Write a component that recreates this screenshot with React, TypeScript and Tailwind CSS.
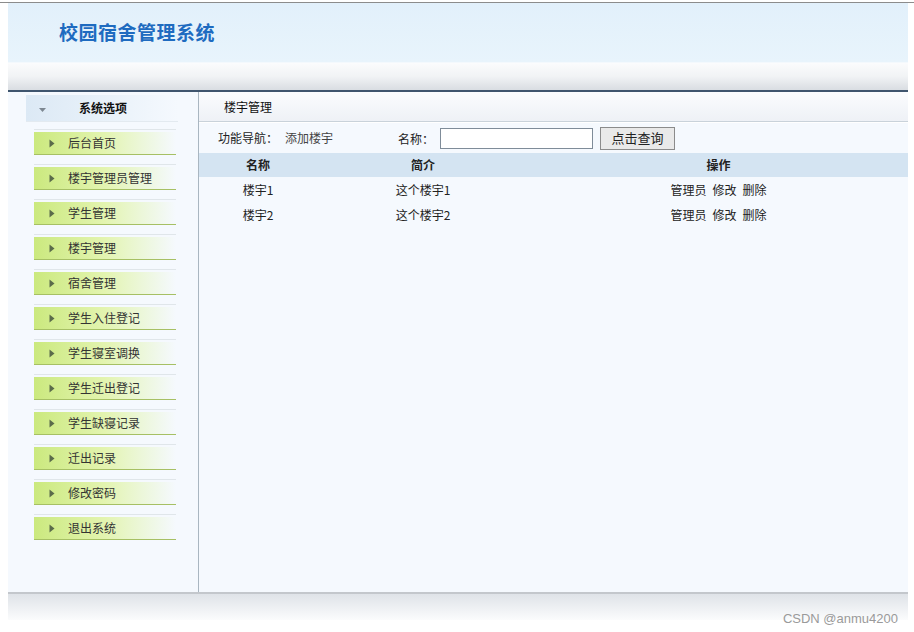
import React from "react";

const menu = [
  "后台首页",
  "楼宇管理员管理",
  "学生管理",
  "楼宇管理",
  "宿舍管理",
  "学生入住登记",
  "学生寝室调换",
  "学生迁出登记",
  "学生缺寝记录",
  "迁出记录",
  "修改密码",
  "退出系统",
];

const rows = [
  { name: "楼宇1", intro: "这个楼宇1" },
  { name: "楼宇2", intro: "这个楼宇2" },
];

const font = "font-['Noto_Sans_CJK_SC','Noto_Sans',sans-serif]";

function RightArrow() {
  return (
    <svg width="6" height="9" viewBox="0 0 6 9" className="shrink-0">
      <path d="M0.5 0.5 L5.5 4.5 L0.5 8.5 Z" fill="#5a6b4a" />
    </svg>
  );
}

function DownArrow() {
  return (
    <svg width="7" height="4" viewBox="0 0 7 4" className="shrink-0">
      <path d="M0 0 L7 0 L3.5 4 Z" fill="#7d8791" />
    </svg>
  );
}

export default function App() {
  return (
    <div className={`relative h-[632px] w-[914px] overflow-hidden bg-white text-[12px] text-[#222] ${font}`}>
      <div className="h-[2px]" />
      <div className="border-t border-[#8c8c8c]" />

      <div className="ml-[8px] w-[900px]">
        {/* header */}
        <div className="flex h-[60px] items-center bg-linear-to-b from-[#e2f0fb] to-[#e8f4fc] pl-[51px] border-b border-[#f4f9fd]">
          <span className="text-[19px] font-bold tracking-[0.5px] text-[#1e6bc0]">
            校园宿舍管理系统
          </span>
        </div>

        {/* bar */}
        <div className="h-[27px] bg-linear-to-b from-[#fbfcfd] via-[#f1f3f5] to-[#d9dde2]" />
        <div className="h-[2px] bg-[#3f556e]" />

        {/* body */}
        <div className="flex h-[500px] bg-[#f5f9fe]">
          {/* sidebar */}
          <div className="w-[191px] shrink-0 border-r border-[#a9b6c1] pt-[3px]">
            <div className="ml-[18px] flex h-[27px] w-[152px] items-center border-b border-[#e3eaf0] bg-linear-to-r from-[#dce9f5] via-[#e8f1f9] to-[#f5f9fe]">
              <span className="ml-[13px] mt-[3px]">
                <DownArrow />
              </span>
              <span className="ml-[33px] font-bold text-[#111]">系统选项</span>
            </div>
            <div className="mt-[7px]">
              {menu.map((m) => (
                <div key={m} className="mb-[9px] ml-[26px] w-[142px] border-t border-[#e0e6ea] pt-[2px]">
                  <div className="flex h-[23px] items-center border-b border-[#a6c064] bg-linear-to-r from-[#cbe97e] via-[#e3f4b0] to-[#f5f9fe] pl-[15px]">
                    <RightArrow />
                    <span className="ml-[13px] text-[#333]">{m}</span>
                  </div>
                </div>
              ))}
            </div>
          </div>

          {/* main */}
          <div className="flex-1">
            <div className="flex h-[30px] items-center border-b border-[#c9d2da] bg-linear-to-b from-[#fbfcfe] to-[#eef1f6] pl-[25px]">
              <span className="text-[#111]">楼宇管理</span>
            </div>
            <div className="h-[1px] bg-white" />
            <div className="flex h-[30px] items-center pl-[19px]">
              <span>功能导航：</span>
              <span className="ml-[7px] text-[#444]">添加楼宇</span>
              <span className="ml-[65px] mt-[2px]">名称：</span>
              <input
                className="ml-[6px] h-[21px] w-[153px] border border-[#7f8c99] bg-white outline-none"
                type="text"
              />
              <button className="ml-[7px] h-[23px] w-[75px] border border-[#8b8b8b] bg-[#e9e9e9] text-[13px] text-[#222]">
                点击查询
              </button>
            </div>
            <table className="w-full border-collapse">
              <thead>
                <tr className="h-[24px] bg-[#d4e4f2]">
                  <th className="w-[118px] text-center font-bold">名称</th>
                  <th className="w-[212px] text-center font-bold">简介</th>
                  <th className="text-center font-bold">操作</th>
                </tr>
              </thead>
              <tbody>
                {rows.map((r) => (
                  <tr key={r.name} className="h-[25px]">
                    <td className="text-center">{r.name}</td>
                    <td className="text-center">{r.intro}</td>
                    <td className="text-center">
                      <span>管理员</span>
                      <span className="ml-[6px]">修改</span>
                      <span className="ml-[6px]">删除</span>
                    </td>
                  </tr>
                ))}
              </tbody>
            </table>
          </div>
        </div>

        {/* footer */}
        <div className="h-[2px] bg-[#c3c7cc]" />
        <div className="h-[26px] bg-linear-to-b from-[#dfe3e8] to-[#fbfcfd]" />
      </div>

      <div className="absolute right-[16px] top-[609px] font-['Liberation_Sans',sans-serif] text-[13px] text-[#9a9a9a]">
        CSDN @anmu4200
      </div>
    </div>
  );
}
